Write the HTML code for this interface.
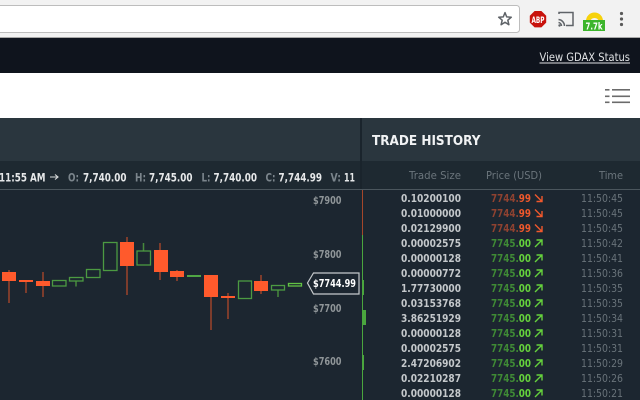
<!DOCTYPE html>
<html><head><meta charset="utf-8"><style>
html,body{margin:0;padding:0;background:#1c2630;width:640px;height:400px;overflow:hidden}
svg{display:block}
text{font-family:"DejaVu Sans",sans-serif}
.s{font-weight:bold;font-size:11px;fill:#c4c8cb}
.p1{font-weight:bold;font-size:11px}
.t{font-size:11px;fill:#69737a}
.h{font-size:11px;fill:#6b757c}
.a{font-weight:bold;font-size:10.500px;fill:#8f9598}
.st{font-weight:bold;font-size:11.500px;fill:#e6e8e9}
.sl{font-weight:bold;font-size:11.500px;fill:#7b858c}
.gd{fill:#3f8a35}.gb{fill:#66d23c}.rd{fill:#8f4230}.rb{fill:#f0582c}
</style></head><body>
<svg width="640" height="400" viewBox="0 0 640 400" xmlns="http://www.w3.org/2000/svg">
<!-- browser chrome -->
<rect width="640" height="38" fill="#f2f2f2"/>
<rect x="-4" y="5.5" width="523.5" height="27" rx="3" fill="#fff" stroke="#bdbdbd"/>
<rect y="37" width="640" height="1" fill="#a8a8a8"/>
<path d="M505 12.600l1.700 4.300 4.600.3-3.500 3 1.100 4.500-3.900-2.500-3.900 2.500 1.100-4.500-3.500-3 4.600-.3z" fill="none" stroke="#5f6368" stroke-width="1.500" stroke-linejoin="round"/>
<path d="M534.600 11h6.800l4.800 4.800v6.800l-4.800 4.800h-6.800l-4.800-4.800v-6.800z" fill="#c8120c"/>
<text x="531.500" y="22.800" font-size="9" font-weight="bold" fill="#fff" textLength="13" lengthAdjust="spacingAndGlyphs">ABP</text>
<path d="M559 14v-1.500h14v13h-7M558.500 19.500a6.500 6.500 0 0 1 6 6.500M558.500 22.500a3.500 3.500 0 0 1 3 3.500" fill="none" stroke="#5f6368" stroke-width="1.500"/>
<circle cx="559.500" cy="25.500" r="1.200" fill="#5f6368"/>
<path d="M586 21a8.500 8.500 0 0 1 17 0h-4.500a4 3 0 0 0-8 0z" fill="#f6d20c"/>
<rect x="583" y="20" width="22" height="11" fill="#3cb52c"/>
<text x="585.500" y="29.500" font-size="10" font-weight="bold" fill="#fff" textLength="17" lengthAdjust="spacingAndGlyphs">7.7k</text>
<circle cx="621.500" cy="13.500" r="1.600" fill="#5a5a5a"/><circle cx="621.500" cy="19" r="1.600" fill="#5a5a5a"/><circle cx="621.500" cy="24.500" r="1.600" fill="#5a5a5a"/>
<!-- dark bar -->
<rect y="38" width="640" height="35" fill="#0f141d"/>
<text x="539.500" y="61" font-size="11.500" fill="#dfe1e3" textLength="90.500" lengthAdjust="spacingAndGlyphs">View GDAX Status</text>
<rect x="539.500" y="62.500" width="90.500" height="1" fill="#dfe1e3"/>
<!-- white bar -->
<rect y="73" width="640" height="45" fill="#fff"/>
<g fill="#6b6b6b">
<rect x="605" y="89" width="4.500" height="1.600"/><rect x="612" y="89" width="18" height="1.600"/>
<rect x="605" y="95.500" width="4.500" height="1.600"/><rect x="612" y="95.500" width="18" height="1.600"/>
<rect x="605" y="101.500" width="4.500" height="1.600"/><rect x="612" y="101.500" width="18" height="1.600"/>
</g>
<!-- panel base -->
<rect y="118" width="640" height="43" fill="#2a363e"/>
<rect y="161" width="640" height="239" fill="#1c2630"/>
<rect y="161" width="640" height="28" fill="#1e2931"/>
<rect x="360" y="118" width="2" height="71" fill="#1a242c"/>
<rect y="189" width="640" height="1" fill="#4b565d"/>
<!-- header row -->
<text x="-1" y="181.500" class="st" textLength="46.500" lengthAdjust="spacingAndGlyphs">11:55 AM</text>
<path d="M50 177h8m-3-2.500l3 2.500-3 2.500" fill="none" stroke="#d8dadb" stroke-width="1.100"/>
<text x="68" y="181.500" class="sl" textLength="11" lengthAdjust="spacingAndGlyphs">O:</text>
<text x="83" y="181.500" class="st" textLength="43.500" lengthAdjust="spacingAndGlyphs">7,740.00</text>
<text x="135" y="181.500" class="sl" textLength="11" lengthAdjust="spacingAndGlyphs">H:</text>
<text x="149" y="181.500" class="st" textLength="43.500" lengthAdjust="spacingAndGlyphs">7,745.00</text>
<text x="201.500" y="181.500" class="sl" textLength="9" lengthAdjust="spacingAndGlyphs">L:</text>
<text x="213.500" y="181.500" class="st" textLength="43.500" lengthAdjust="spacingAndGlyphs">7,740.00</text>
<text x="265.500" y="181.500" class="sl" textLength="10" lengthAdjust="spacingAndGlyphs">C:</text>
<text x="278.500" y="181.500" class="st" textLength="43.500" lengthAdjust="spacingAndGlyphs">7,744.99</text>
<text x="330.500" y="181.500" class="sl" textLength="10.500" lengthAdjust="spacingAndGlyphs">V:</text>
<text x="344" y="181.500" class="st" textLength="11" lengthAdjust="spacingAndGlyphs">11</text>
<!-- axis -->
<text x="313" y="204" class="a" textLength="28.500" lengthAdjust="spacingAndGlyphs">$7900</text>
<text x="313" y="258" class="a" textLength="28.500" lengthAdjust="spacingAndGlyphs">$7800</text>
<text x="313" y="312" class="a" textLength="28.500" lengthAdjust="spacingAndGlyphs">$7700</text>
<text x="313" y="365" class="a" textLength="28.500" lengthAdjust="spacingAndGlyphs">$7600</text>
<path d="M307.500 283l6-10h45.500v21h-45.500z" fill="#1c2630" stroke="#c6cacc" stroke-width="1.200"/>
<text x="313" y="287" font-size="10.500" font-weight="bold" fill="#fff" textLength="43" lengthAdjust="spacingAndGlyphs">$7744.99</text>
<!-- wicks -->
<g stroke="#7c3c2c" stroke-width="2" fill="none">
<path d="M9 270v33M26 282v11M43 272v25M127 237v58M160 243v37M177 270v11M211 297v33M228 293v26M261 275v19"/>
</g>
<g stroke="#47893c" stroke-width="1.500" fill="none">
<path d="M76 281v5.500M143.500 243v8M278 290v7"/>
</g>
<!-- red bodies -->
<g fill="#ff5a2c">
<rect x="2" y="272" width="14" height="9"/>
<rect x="19" y="280" width="14" height="2"/>
<rect x="36" y="281" width="14" height="5"/>
<rect x="120" y="242" width="14" height="24"/>
<rect x="154" y="250" width="14" height="22"/>
<rect x="170" y="271" width="14" height="6"/>
<rect x="204" y="275" width="14" height="22"/>
<rect x="221" y="296" width="14" height="2"/>
<rect x="254" y="281" width="14" height="10"/>
</g>
<!-- green bodies -->
<g fill="#1c2630" stroke="#4c9a42" stroke-width="1.300">
<rect x="52.500" y="280.500" width="13.500" height="5.500"/>
<rect x="69.500" y="277.500" width="13.500" height="3.500"/>
<rect x="86.500" y="269.500" width="13.500" height="8"/>
<rect x="103.500" y="242.500" width="13.500" height="28"/>
<rect x="137" y="251" width="13.500" height="14"/>
<rect x="238.500" y="281" width="13" height="17.500"/>
<rect x="271.500" y="285.500" width="13" height="4.500"/>
<rect x="288.500" y="283.500" width="13" height="2.500" stroke="#62c244"/>
</g>
<rect x="187" y="275" width="14" height="2" fill="#4fa644"/>
<!-- trade history panel -->
<text x="372" y="145" font-size="13.500" font-weight="bold" fill="#f1f3f4" textLength="108.500" lengthAdjust="spacingAndGlyphs">TRADE HISTORY</text>
<text x="409" y="179" class="h" textLength="52" lengthAdjust="spacingAndGlyphs">Trade Size</text>
<text x="486" y="179" class="h" textLength="56" lengthAdjust="spacingAndGlyphs">Price (USD)</text>
<text x="599" y="179" class="h" textLength="24" lengthAdjust="spacingAndGlyphs">Time</text>
<rect x="362" y="190" width="1" height="45" fill="#a5462a"/>
<rect x="362" y="235" width="1" height="165" fill="#4aa63e"/>
<rect x="362" y="280" width="2" height="15" fill="#4aa63e"/>
<rect x="362" y="310" width="4" height="15" fill="#4aa63e"/>
<rect x="362" y="355" width="2" height="15" fill="#4aa63e"/>

<text x="401" y="202" class="s" textLength="60" lengthAdjust="spacingAndGlyphs">0.10200100</text>
<text x="491" y="202" class="p1" textLength="40" lengthAdjust="spacingAndGlyphs"><tspan class="rd">7744.</tspan><tspan class="rb">99</tspan></text>
<text x="581" y="202" class="t" textLength="42" lengthAdjust="spacingAndGlyphs">11:50:45</text>
<text x="401" y="217" class="s" textLength="60" lengthAdjust="spacingAndGlyphs">0.01000000</text>
<text x="491" y="217" class="p1" textLength="40" lengthAdjust="spacingAndGlyphs"><tspan class="rd">7744.</tspan><tspan class="rb">99</tspan></text>
<text x="581" y="217" class="t" textLength="42" lengthAdjust="spacingAndGlyphs">11:50:45</text>
<text x="401" y="232" class="s" textLength="60" lengthAdjust="spacingAndGlyphs">0.02129900</text>
<text x="491" y="232" class="p1" textLength="40" lengthAdjust="spacingAndGlyphs"><tspan class="rd">7744.</tspan><tspan class="rb">99</tspan></text>
<text x="581" y="232" class="t" textLength="42" lengthAdjust="spacingAndGlyphs">11:50:45</text>
<text x="401" y="247" class="s" textLength="60" lengthAdjust="spacingAndGlyphs">0.00002575</text>
<text x="491" y="247" class="p1" textLength="40" lengthAdjust="spacingAndGlyphs"><tspan class="gd">7745.</tspan><tspan class="gb">00</tspan></text>
<text x="581" y="247" class="t" textLength="42" lengthAdjust="spacingAndGlyphs">11:50:42</text>
<text x="401" y="262" class="s" textLength="60" lengthAdjust="spacingAndGlyphs">0.00000128</text>
<text x="491" y="262" class="p1" textLength="40" lengthAdjust="spacingAndGlyphs"><tspan class="gd">7745.</tspan><tspan class="gb">00</tspan></text>
<text x="581" y="262" class="t" textLength="42" lengthAdjust="spacingAndGlyphs">11:50:41</text>
<text x="401" y="277" class="s" textLength="60" lengthAdjust="spacingAndGlyphs">0.00000772</text>
<text x="491" y="277" class="p1" textLength="40" lengthAdjust="spacingAndGlyphs"><tspan class="gd">7745.</tspan><tspan class="gb">00</tspan></text>
<text x="581" y="277" class="t" textLength="42" lengthAdjust="spacingAndGlyphs">11:50:36</text>
<text x="401" y="292" class="s" textLength="60" lengthAdjust="spacingAndGlyphs">1.77730000</text>
<text x="491" y="292" class="p1" textLength="40" lengthAdjust="spacingAndGlyphs"><tspan class="gd">7745.</tspan><tspan class="gb">00</tspan></text>
<text x="581" y="292" class="t" textLength="42" lengthAdjust="spacingAndGlyphs">11:50:35</text>
<text x="401" y="307" class="s" textLength="60" lengthAdjust="spacingAndGlyphs">0.03153768</text>
<text x="491" y="307" class="p1" textLength="40" lengthAdjust="spacingAndGlyphs"><tspan class="gd">7745.</tspan><tspan class="gb">00</tspan></text>
<text x="581" y="307" class="t" textLength="42" lengthAdjust="spacingAndGlyphs">11:50:35</text>
<text x="401" y="322" class="s" textLength="60" lengthAdjust="spacingAndGlyphs">3.86251929</text>
<text x="491" y="322" class="p1" textLength="40" lengthAdjust="spacingAndGlyphs"><tspan class="gd">7745.</tspan><tspan class="gb">00</tspan></text>
<text x="581" y="322" class="t" textLength="42" lengthAdjust="spacingAndGlyphs">11:50:34</text>
<text x="401" y="337" class="s" textLength="60" lengthAdjust="spacingAndGlyphs">0.00000128</text>
<text x="491" y="337" class="p1" textLength="40" lengthAdjust="spacingAndGlyphs"><tspan class="gd">7745.</tspan><tspan class="gb">00</tspan></text>
<text x="581" y="337" class="t" textLength="42" lengthAdjust="spacingAndGlyphs">11:50:31</text>
<text x="401" y="352" class="s" textLength="60" lengthAdjust="spacingAndGlyphs">0.00002575</text>
<text x="491" y="352" class="p1" textLength="40" lengthAdjust="spacingAndGlyphs"><tspan class="gd">7745.</tspan><tspan class="gb">00</tspan></text>
<text x="581" y="352" class="t" textLength="42" lengthAdjust="spacingAndGlyphs">11:50:31</text>
<text x="401" y="367" class="s" textLength="60" lengthAdjust="spacingAndGlyphs">2.47206902</text>
<text x="491" y="367" class="p1" textLength="40" lengthAdjust="spacingAndGlyphs"><tspan class="gd">7745.</tspan><tspan class="gb">00</tspan></text>
<text x="581" y="367" class="t" textLength="42" lengthAdjust="spacingAndGlyphs">11:50:29</text>
<text x="401" y="382" class="s" textLength="60" lengthAdjust="spacingAndGlyphs">0.02210287</text>
<text x="491" y="382" class="p1" textLength="40" lengthAdjust="spacingAndGlyphs"><tspan class="gd">7745.</tspan><tspan class="gb">00</tspan></text>
<text x="581" y="382" class="t" textLength="42" lengthAdjust="spacingAndGlyphs">11:50:26</text>
<text x="401" y="397" class="s" textLength="60" lengthAdjust="spacingAndGlyphs">0.00000128</text>
<text x="491" y="397" class="p1" textLength="40" lengthAdjust="spacingAndGlyphs"><tspan class="gd">7745.</tspan><tspan class="gb">00</tspan></text>
<text x="581" y="397" class="t" textLength="42" lengthAdjust="spacingAndGlyphs">11:50:21</text>
<!-- arrows -->
<g fill="none" stroke="#f0582c" stroke-width="1.400">
<path d="M535 194.500l7 7m-5.500 0h5.500v-5.500"/>
<path d="M535 209.500l7 7m-5.500 0h5.500v-5.500"/>
<path d="M535 224.500l7 7m-5.500 0h5.500v-5.500"/>
</g>
<g fill="none" stroke="#66d23c" stroke-width="1.400">
<path d="M535 247l7-7m-5.500 0h5.500v5.500"/>
<path d="M535 262l7-7m-5.500 0h5.500v5.500"/>
<path d="M535 277l7-7m-5.500 0h5.500v5.500"/>
<path d="M535 292l7-7m-5.500 0h5.500v5.500"/>
<path d="M535 307l7-7m-5.500 0h5.500v5.500"/>
<path d="M535 322l7-7m-5.500 0h5.500v5.500"/>
<path d="M535 337l7-7m-5.500 0h5.500v5.500"/>
<path d="M535 352l7-7m-5.500 0h5.500v5.500"/>
<path d="M535 367l7-7m-5.500 0h5.500v5.500"/>
<path d="M535 382l7-7m-5.500 0h5.500v5.500"/>
<path d="M535 397l7-7m-5.500 0h5.500v5.500"/>
</g>
</svg>
</body></html>
